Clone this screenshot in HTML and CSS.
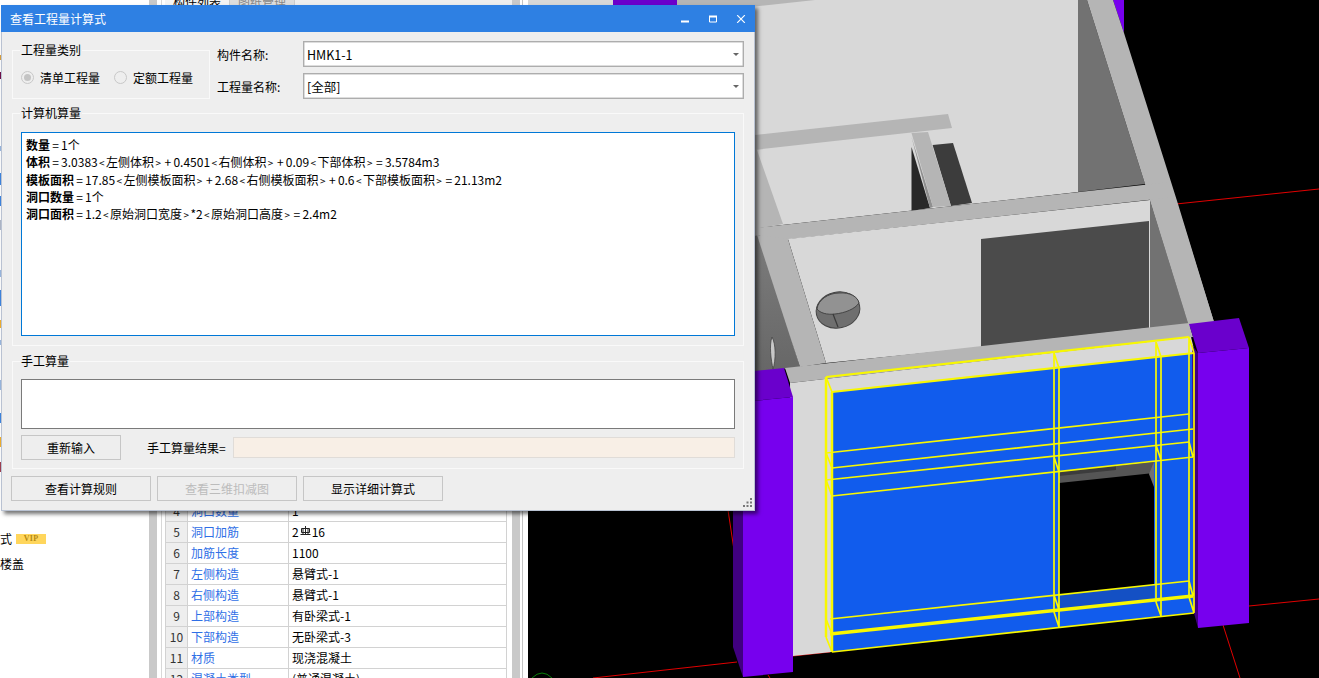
FILE: index.html
```html
<!DOCTYPE html>
<html lang="zh-CN">
<head>
<meta charset="utf-8">
<title>查看工程量计算式</title>
<link rel="stylesheet" href="styles.css">
</head>
<body>
<div class="app">
  <aside class="tree">
    <svg class="tree-scraps" width="1" height="520" aria-hidden="true">
      <rect y="55" width="1" height="5" fill="#d9a040"/>
      <rect y="72" width="1" height="7" fill="#70104a"/>
      <rect y="146" width="1" height="5" fill="#9ab8e0"/>
      <rect y="173" width="1" height="12" fill="#3f86e0"/>
      <rect y="196" width="1" height="10" fill="#3f86e0"/>
      <rect y="220" width="1" height="10" fill="#b0b8c8"/>
      <rect y="270" width="1" height="7" fill="#9ab8e0"/>
      <rect y="290" width="1" height="16" fill="#3f86e0"/>
      <rect y="320" width="1" height="8" fill="#f0b030"/>
      <rect y="340" width="1" height="5" fill="#9ab8e0"/>
      <rect y="380" width="1" height="10" fill="#9ab8e0"/>
      <rect y="413" width="1" height="10" fill="#3f86e0"/>
      <rect y="437" width="1" height="10" fill="#f0b030"/>
      <rect y="462" width="1" height="10" fill="#a04050"/>
    </svg>
    <div class="tree-row"><span>式</span><span class="vip">VIP</span></div>
    <div class="tree-row tree-row-short"><span>楼盖</span></div>
  </aside>
  <div class="gutter"></div>
  <section class="props">
    <div class="tabs">
      <span class="tab tab-on">构件列表</span>
      <span class="tab tab-off">图纸管理</span>
    </div>
    <table class="prop-table">
      <colgroup><col class="c-no"><col class="c-name"><col class="c-val"></colgroup>
      <tr><td class="no">4</td><td class="name">洞口数量</td><td>1</td></tr>
      <tr><td class="no">5</td><td class="name">洞口加筋</td><td>2<svg class="rebar" width="11" height="12" viewBox="0 0 11 12" aria-hidden="true"><path d="M1.5 2.5h8v4h-8zM5.5 0v8.5M3 3v5.5M8 3v5.5M.5 8.5h10" fill="none" stroke="#222" stroke-width="1"/></svg>16</td></tr>
      <tr><td class="no">6</td><td class="name">加筋长度</td><td>1100</td></tr>
      <tr><td class="no">7</td><td class="name">左侧构造</td><td>悬臂式-1</td></tr>
      <tr><td class="no">8</td><td class="name">右侧构造</td><td>悬臂式-1</td></tr>
      <tr><td class="no">9</td><td class="name">上部构造</td><td>有卧梁式-1</td></tr>
      <tr><td class="no">10</td><td class="name">下部构造</td><td>无卧梁式-3</td></tr>
      <tr><td class="no">11</td><td class="name">材质</td><td>现浇混凝土</td></tr>
      <tr><td class="no">12</td><td class="name">混凝土类型</td><td>(普通混凝土)</td></tr>
    </table>
  </section>
  <div class="gutter"></div>
  <div class="thin"></div>
  <main class="canvas">
    <svg class="scene" width="791" height="678" viewBox="528 0 791 678" aria-hidden="true">
      <defs>
        <linearGradient id="wallGrad" x1="0" y1="0" x2="0" y2="1">
          <stop offset="0" stop-color="#7c7c7c"/>
          <stop offset="1" stop-color="#666"/>
        </linearGradient>
      </defs>
      <g class="axis">
        <path d="M1176 204L1319 189M1249 606L1319 599M1223 625L1240 678M728 510L740 590M593 678L737 662M768 675L770 678M793 656L830 652"/>
      </g>
      <path class="origin" d="M532 678Q542 668 552 678"/>
      <!-- floor, back walls -->
      <polygon class="light" points="528,0 1078,0 1078,192 755,228 528,228"/>
      <polygon class="purple-cap" points="613,0 677,0 677,12 613,16"/>
      <polygon class="beam" points="677,0 815,0 750,7 677,13"/>
      <polygon class="wall" points="1078,0 1087,0 1145,184 1078,192"/>
      <polygon class="purple" points="1113,0 1124,0 1124,33"/>
      <polygon class="beam" points="1087,0 1113,0 1124,33 1178,204 1214,322 1189,326 1150,200 1145,184"/>
      <polygon class="beam" points="700,141 948,114 952,128 700,156"/>
      <polygon class="shadow" points="911.5,147 930,208 911.5,211"/>
      <polygon class="dark2" points="932.6,145 953,143 972,203 951,206"/>
      <polygon class="mid" points="911.5,137 933,207 930,208"/>
      <polygon class="beam" points="911.5,133 928,132 951,206 933,207"/>
      <polygon class="beam" points="700,150 757,150 783,224 760,228 700,228"/>
      <polygon class="beam" points="700,234 1170,182 1175,197 700,249"/>
      <!-- front room -->
      <polygon class="light" points="788,239 1150,200 1150,330 826,363"/>
      <polygon class="dark" points="981,239 1149,221 1149,328 981,347"/>
      <polygon class="wall" points="1150,200 1189,325 1150,330"/>
      <polygon class="beam" points="1150,200 1175,197 1214,322 1189,326"/>
      <polygon class="wall-grad" points="700,245 760,235 800,367 700,378"/>
      <polygon class="beam" points="757,235 788,239 826,363 800,367"/>
      <path class="slot" d="M772 337C769 345 771 360 773 369C776 360 776 344 772 337Z"/>
      <!-- pipe -->
      <g class="pipe">
        <ellipse class="pipe-body" cx="838" cy="310" rx="22" ry="18" transform="rotate(-12 838 310)"/>
        <path class="pipe-cap" d="M817 309C818 300 828 293 839 293C850 292 858 297 859 303C855 309 845 313 835 314C827 315 820 313 817 309Z"/>
        <path class="pipe-line" d="M833 314L838 327"/>
      </g>
      <!-- front beam and wall -->
      <polygon class="beam" points="785,368 1189,323 1193,337 790,383"/>
      <polygon class="light" points="790,383 1191,337 1195,353 832,393 832,652 793,656"/>
      <polygon class="blue" points="832,392 1194,353 1194,613 832,652"/>
      <!-- door opening -->
      <polygon class="void" points="1059,472 1154,462 1154,585 1059,595"/>
      <polygon class="dark3" points="1059,472 1154,462 1154,473 1059,483"/>
      <polygon class="dark2" points="1059,472 1116,466 1116,470 1059,476"/>
      <polygon class="wall" points="1149,474 1154,462 1154,487"/>
      <polygon class="blue-dark" points="1059,595 1154,585 1154,600 1059,610"/>
      <!-- columns -->
      <polygon class="purple-side" points="733,400 743,402 743,677 733,647"/>
      <polygon class="purple-cap" points="733,373 784,368 793,397 743,402"/>
      <polygon class="purple" points="743,402 793,397 793,672 743,677"/>
      <polygon class="purple-cap" points="1189,324 1239,318 1249,348 1198,353"/>
      <polygon class="purple-side" points="1192,345 1198,353 1198,628 1194,613"/>
      <polygon class="purple" points="1198,353 1249,348 1249,623 1198,628"/>
      <!-- wireframe -->
      <g class="wire">
        <path class="wire-top" d="M826 377L1189 337M832 392L1194 353"/>
        <path class="wire-edge" d="M826 377V637M832 392V652"/>
        <path d="M826 377L832 392M826 453L832 468M826 480L832 496M826 619L832 634M826 637L832 652"/>
        <path d="M826 453L1189 414M832 468L1193 429M826 480L1189 442M832 496L1193 457"/>
        <path d="M830 619L1189 581M832 652L1194 613"/>
        <path class="wire-thick" d="M830 634L1193 596"/>
        <path d="M1054 353V612M1059 368V627M1054 353L1059 368M1054 457L1059 472M1054 595L1059 610M1054 612L1059 627"/>
        <path d="M1156 342V602M1161 357V616M1156 342L1161 357M1156 445L1161 460M1156 602L1161 616"/>
        <path d="M1189 337V597M1194 353V613M1189 337L1194 353M1189 442L1193 457M1189 581L1193 596M1189 597L1194 613"/>
      </g>
    </svg>
  </main>
</div>

<div class="dialog">
  <header class="titlebar">
    <span class="title">查看工程量计算式</span>
    <div class="win-controls">
      <svg class="win-btn" width="10" height="8" viewBox="0 0 10 8" aria-hidden="true"><rect x="1" y="5.5" width="8" height="2" fill="#fff"/></svg>
      <svg class="win-btn" width="10" height="8" viewBox="0 0 10 8" aria-hidden="true"><path d="M1.5 1.5h7v5.5h-7z" fill="none" stroke="#fff"/><rect x="1" y="0.5" width="8" height="2" fill="#fff"/></svg>
      <svg class="win-btn" width="10" height="8" viewBox="0 0 10 8" aria-hidden="true"><path d="M1.2 0.2L8.8 7.8M8.8 0.2L1.2 7.8" stroke="#fff" stroke-width="1.2"/></svg>
    </div>
  </header>
  <div class="dialog-body">
    <div class="top-row">
      <fieldset class="group group-type">
        <legend>工程量类别</legend>
        <div class="radios">
          <label class="radio"><span class="radio-mark radio-on"></span>清单工程量</label>
          <label class="radio"><span class="radio-mark"></span>定额工程量</label>
        </div>
      </fieldset>
      <div class="fields">
        <span class="field-label">构件名称:</span>
        <div class="combo"><span>HMK1-1</span><i class="caret"></i></div>
        <span class="field-label">工程量名称:</span>
        <div class="combo"><span>[全部]</span><i class="caret"></i></div>
      </div>
    </div>

    <fieldset class="group group-calc">
      <legend>计算机算量</legend>
      <div class="formula-box">
        <div class="line"><b>数量</b><i class="op">=</i>1个</div>
        <div class="line"><b>体积</b><i class="op">=</i>3.0383<i class="ang">&lt;</i>左侧体积<i class="ang">&gt;</i><i class="op">+</i>0.4501<i class="ang">&lt;</i>右侧体积<i class="ang">&gt;</i><i class="op">+</i>0.09<i class="ang">&lt;</i>下部体积<i class="ang">&gt;</i><i class="op">=</i>3.5784m3</div>
        <div class="line"><b>模板面积</b><i class="op">=</i>17.85<i class="ang">&lt;</i>左侧模板面积<i class="ang">&gt;</i><i class="op">+</i>2.68<i class="ang">&lt;</i>右侧模板面积<i class="ang">&gt;</i><i class="op">+</i>0.6<i class="ang">&lt;</i>下部模板面积<i class="ang">&gt;</i><i class="op">=</i>21.13m2</div>
        <div class="line"><b>洞口数量</b><i class="op">=</i>1个</div>
        <div class="line"><b>洞口面积</b><i class="op">=</i>1.2<i class="ang">&lt;</i>原始洞口宽度<i class="ang">&gt;</i>*2<i class="ang">&lt;</i>原始洞口高度<i class="ang">&gt;</i><i class="op">=</i>2.4m2</div>
      </div>
    </fieldset>

    <fieldset class="group group-manual">
      <legend>手工算量</legend>
      <div class="manual-box"></div>
      <div class="manual-row">
        <button class="btn btn-reset" type="button">重新输入</button>
        <span class="result-label">手工算量结果=</span>
        <div class="result-box"></div>
      </div>
    </fieldset>

    <div class="actions">
      <button class="btn btn-action" type="button">查看计算规则</button>
      <button class="btn btn-action btn-disabled" type="button">查看三维扣减图</button>
      <button class="btn btn-action" type="button">显示详细计算式</button>
    </div>
  </div>
  <svg class="grip" width="9" height="9" viewBox="0 0 9 9" aria-hidden="true">
    <path d="M7 0h2v2H7zM3.5 3.5h2v2h-2zM7 3.5h2v2H7zM0 7h2v2H0zM3.5 7h2v2h-2zM7 7h2v2H7z" fill="#777"/>
  </svg>
</div>
</body>
</html>
```
FILE: styles.css
```css
* { box-sizing: border-box; }
html, body { margin: 0; height: 100%; overflow: hidden; }
body {
  font: 12px/17px "Noto Sans CJK SC", "Noto Sans", sans-serif;
  color: #000;
  background: #fff;
}
.app { display: flex; height: 678px; overflow: hidden; }

/* left tree */
.tree { width: 149px; padding-top: 526px; background: #fff; position: relative; flex: none; }
.tree-scraps { position: absolute; left: 0; top: 0; }
.tree-row { display: flex; align-items: center; gap: 4px; height: 25px; white-space: nowrap; }
.tree-row-short { height: 24px; }
.vip {
  width: 30px; height: 10px;
  background: #ffd65c; color: #b58a12;
  font: bold 8px/10px "Liberation Serif", serif;
  text-align: center; letter-spacing: .3px;
}
.gutter { width: 8px; flex: none; background: #c9c9c9; }

/* property panel */
.props {
  width: 355px; flex: none; padding-left: 8px;
  background: #fff;
  box-shadow: inset 4px 0 0 #fff, inset 5px 0 0 #d8d8d8;
}
.tabs { display: flex; height: 5px; overflow: hidden; background: #eee; }
.tab { width: 65px; height: 5px; line-height: 3px; text-align: center; border-right: 1px solid #ccc; }
.tab-on { background: #f4f4f4; }
.tab-off { background: #ddd; color: #888; }
.prop-table {
  margin-top: 495px;
  width: 341px;
  table-layout: fixed;
  border-collapse: collapse;
  background: #fff;
}
.c-no { width: 22px; }
.c-name { width: 101px; }
.c-val { width: 218px; }
.prop-table td {
  height: 21px; padding: 0 3px;
  border: 1px solid #d2d2d2;
  line-height: 18px; white-space: nowrap; overflow: hidden;
}
.prop-table .no { background: #eee; color: #333; text-align: center; padding: 0; }
.prop-table .name { color: #2f6fe6; }
.rebar { vertical-align: -1px; margin: 0 1px; }

.thin { width: 8px; flex: none; background: #fff; box-shadow: inset -5px 0 0 #fff, inset -6px 0 0 #c4c4c4; }
.canvas { flex: 1; background: #000; overflow: hidden; }
.scene { display: block; }
.axis path { fill: none; stroke: #e00000; stroke-width: 1; }
.origin { fill: none; stroke: #0a800a; stroke-width: 1; }
.light { fill: #d8d8d8; }
.beam { fill: #b5b5b5; }
.wall { fill: #727272; }
.wall-grad { fill: url(#wallGrad); }
.mid { fill: #8f8f8f; }
.dark { fill: #4b4b4b; }
.dark2 { fill: #3c3c3c; }
.dark3 { fill: #555; }
.shadow { fill: #282828; }
.void { fill: #000; }
.blue { fill: #115ced; }
.blue-dark { fill: #1450c4; }
.purple { fill: #7700ee; }
.purple-cap { fill: #6a00cc; }
.purple-side { fill: #400080; }
.pipe-body { fill: #6f6f6f; stroke: #444; stroke-width: 1; }
.pipe-cap { fill: #929292; stroke: #444; stroke-width: 1; }
.pipe-line { stroke: #3a3a3a; stroke-width: 1.2; }
.slot { fill: #c8c8c8; stroke: #444; stroke-width: .8; }
.wire path { fill: none; stroke: #f8f800; stroke-width: 1.7; }
.wire .wire-top { stroke-width: 2.2; }
.wire .wire-edge { stroke-width: 2.5; }
.wire .wire-thick { stroke-width: 3.4; }

/* dialog */
.dialog {
  position: absolute; left: 1px; top: 5px;
  width: 754px; height: 506px;
  display: flex; flex-direction: column;
  background: #eee;
  border: 1px solid #b9c2d2; border-top: 0;
  box-shadow: 3px 3px 4px rgba(0, 0, 0, .55);
}
.titlebar {
  height: 27px; flex: none;
  margin: 0 -1px;
  display: flex; align-items: center; justify-content: space-between;
  padding: 0 9px;
  background: #2e80e3; color: #fff;
}
.title { line-height: 27px; }
.win-controls { display: flex; gap: 18px; }
.win-btn { display: block; }
.dialog-body { flex: 1; padding: 9px 10px 0 9px; display: flex; flex-direction: column; }
.group {
  margin: 0 0 0 1px; padding: 0 8px;
  border: 1px solid #f9f9f9;
  min-width: 0;
}
.group legend { padding: 0 1px; margin-left: -1px; line-height: 18px; font-size: 12px; }
.top-row { display: flex; align-items: flex-start; }
.group-type { width: 198px; height: 58px; flex: none; }
.radios { display: flex; gap: 14px; margin: 10px 0 0 0; }
.radio { display: flex; align-items: center; gap: 6px; }
.radio-mark {
  width: 13px; height: 13px; border-radius: 50%;
  border: 1px solid #c8c8c8; flex: none; position: relative;
}
.radio-on::after {
  content: ""; position: absolute; inset: 2px;
  border-radius: 50%; background: #c4c4c4;
}
.fields {
  flex: 1; margin-left: 7px;
  display: grid; grid-template-columns: 86px 1fr; row-gap: 6px; align-items: center;
}
.combo {
  height: 26px; padding: 0 3px;
  display: flex; align-items: center; justify-content: space-between;
  background: #fff; border: 1px solid #adadad;
  box-shadow: inset 0 0 0 .5px #bbb;
  font-size: 12.5px;
}
.caret {
  width: 0; height: 0; margin-right: 1px;
  border: 3px solid transparent; border-top-color: #666; border-bottom: 0;
}
.group-calc { height: 242px; margin-top: 5px; }
.formula-box {
  margin-top: 10px; height: 204px;
  padding: 3px 4px;
  background: #fff; border: 1px solid #0078d7;
  white-space: nowrap;
}
.line { height: 17.25px; line-height: 17px; }
.line b { font-weight: 700; }
.op { font-style: normal; padding: 0 2.2px; }
.ang { font-style: normal; font-size: 10px; line-height: 1; padding: 0 1.4px; }
.group-manual { height: 117px; margin-top: 6px; }
.manual-box { margin-top: 9px; height: 50px; background: #fff; border: 1px solid #7a7a7a; }
.manual-row { display: flex; align-items: center; margin-top: 6px; }
.btn {
  font: inherit; color: #000; padding: 0;
  background: #eee; border: 1px solid #c6c6c6;
}
.btn-reset { width: 100px; height: 25px; }
.result-label { margin: 0 7px 0 26px; white-space: nowrap; }
.result-box { flex: 1; height: 21px; background: #f8efe6; border: 1px solid #e0dcd8; }
.actions { display: flex; gap: 6px; margin-top: 7px; }
.btn-action { width: 140px; height: 25px; }
.btn-disabled { color: #bcbcbc; }
.grip { position: absolute; right: 2px; bottom: 3px; }
```
